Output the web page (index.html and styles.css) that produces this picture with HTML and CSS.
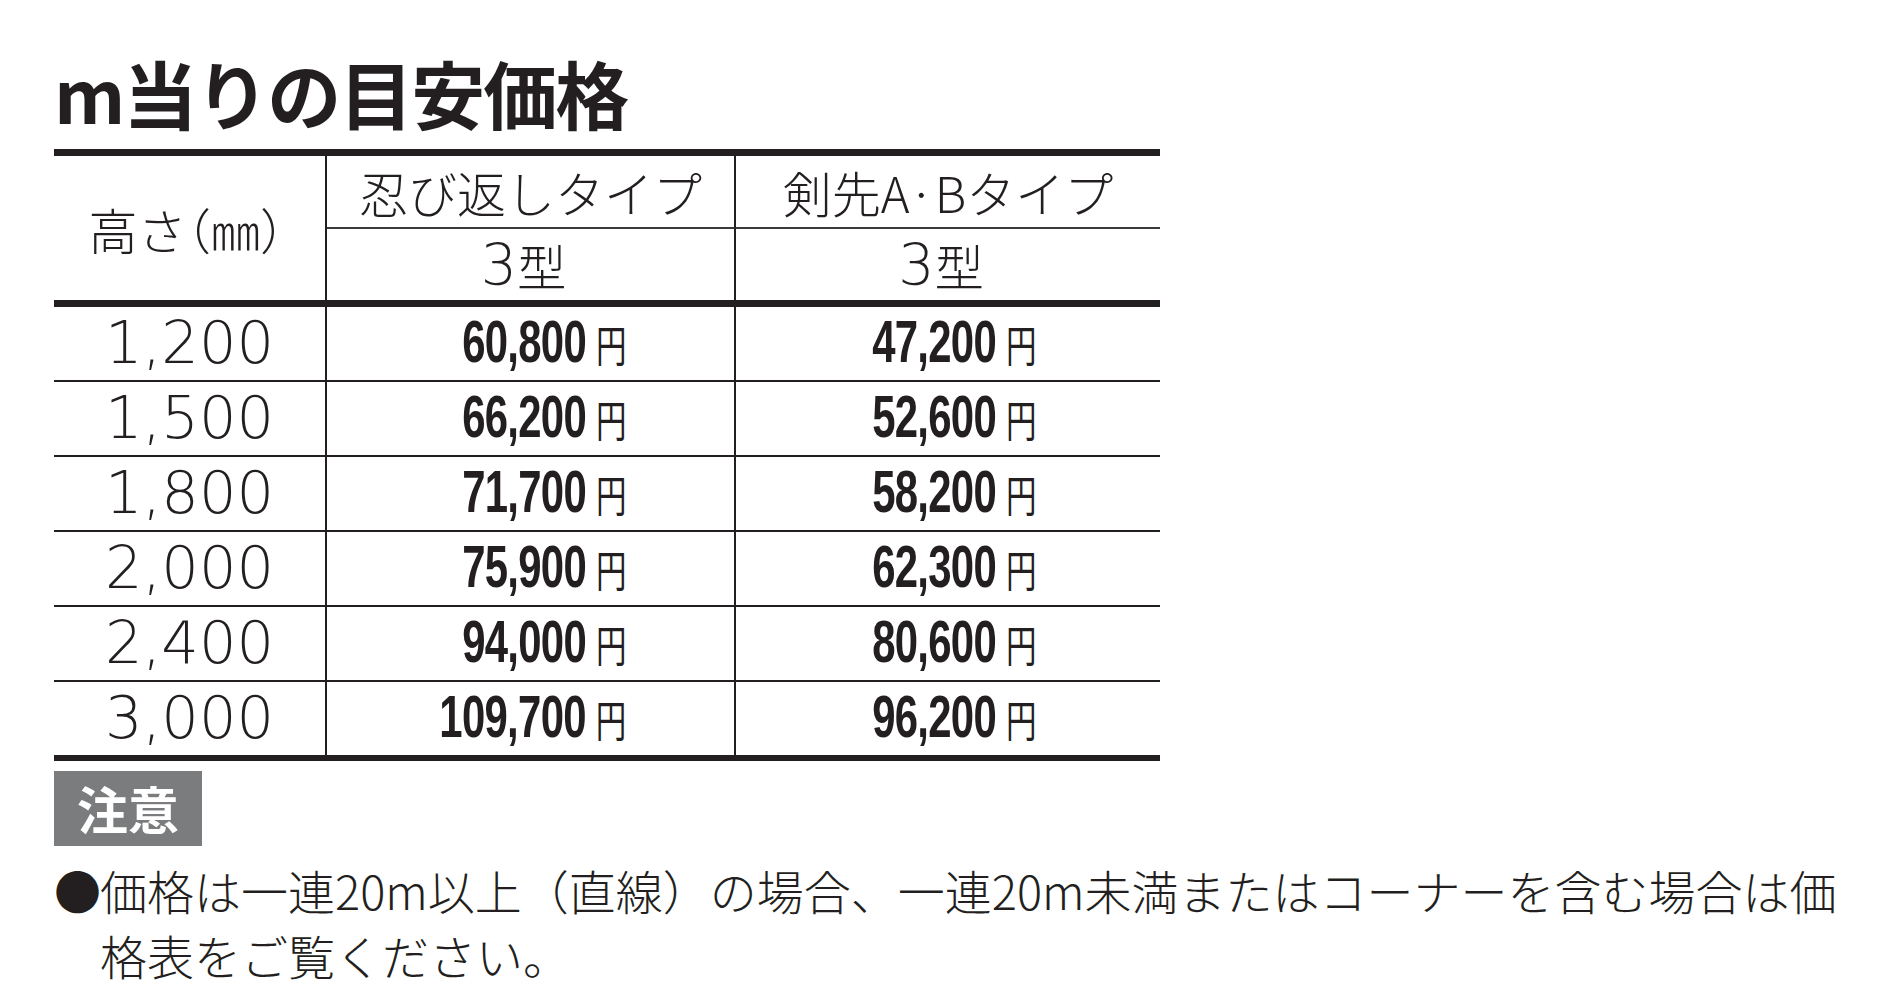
FILE: index.html
```html
<!DOCTYPE html>
<html lang="ja">
<head>
<meta charset="utf-8">
<title>m当りの目安価格</title>
<link rel="stylesheet" href="styles.css">
</head>
<body>
<main class="page">
  <h1 class="title">m当りの目安価格</h1>

  <div class="price-table">
    <div class="cell head head-height">高さ（㎜）</div>
    <div class="cell head head-type col2">忍び返しタイプ</div>
    <div class="cell head head-type col3">剣先A·Bタイプ</div>
    <div class="cell head head-model col2"><span class="num">3</span>型</div>
    <div class="cell head head-model col3"><span class="num">3</span>型</div>

    <div class="cell size">1,200</div>
    <div class="cell price col2"><span class="amount">60,800<span class="yen">円</span></span></div>
    <div class="cell price col3"><span class="amount">47,200<span class="yen">円</span></span></div>

    <div class="cell size">1,500</div>
    <div class="cell price col2"><span class="amount">66,200<span class="yen">円</span></span></div>
    <div class="cell price col3"><span class="amount">52,600<span class="yen">円</span></span></div>

    <div class="cell size">1,800</div>
    <div class="cell price col2"><span class="amount">71,700<span class="yen">円</span></span></div>
    <div class="cell price col3"><span class="amount">58,200<span class="yen">円</span></span></div>

    <div class="cell size">2,000</div>
    <div class="cell price col2"><span class="amount">75,900<span class="yen">円</span></span></div>
    <div class="cell price col3"><span class="amount">62,300<span class="yen">円</span></span></div>

    <div class="cell size">2,400</div>
    <div class="cell price col2"><span class="amount">94,000<span class="yen">円</span></span></div>
    <div class="cell price col3"><span class="amount">80,600<span class="yen">円</span></span></div>

    <div class="cell size last-row">3,000</div>
    <div class="cell price col2 last-row"><span class="amount">109,700<span class="yen">円</span></span></div>
    <div class="cell price col3 last-row"><span class="amount">96,200<span class="yen">円</span></span></div>
  </div>

  <section class="notes">
    <div class="badge">注意</div>
    <p class="note"><span class="bullet">●</span><span class="note-text">価格は一連20m以上（直線）の場合、一連20m未満またはコーナーを含む場合は価<br>格表をご覧ください。</span></p>
  </section>
</main>
</body>
</html>
```

FILE: styles.css
```css
* {
  box-sizing: border-box;
}

html, body {
  margin: 0;
  padding: 0;
  background: #ffffff;
}

body {
  color: #231f20;
  font-family: "Noto Sans CJK JP", "Noto Sans", sans-serif;
}

.page {
  padding: 55px 0 0 54px;
}

.title {
  margin: 0;
  font-size: 74px;
  line-height: 74px;
  font-weight: 700;
  letter-spacing: -2px;
}

.price-table {
  margin-top: 20px;
  width: 1106px;
  display: grid;
  grid-template-columns: 273px 409px 424px;
  border-top: 7px solid #231f20;
  border-bottom: 6px solid #231f20;
}

.cell {
  display: flex;
  align-items: center;
  justify-content: center;
  line-height: 1;
}

.col2,
.head-height,
.size {
  border-right: 2px solid #231f20;
}

.head {
  font-family: "Noto Sans CJK JP", sans-serif;
  font-weight: 300;
  font-size: 49px;
}

.head-height {
  grid-row: span 2;
  height: 151px;
  border-bottom: 7px solid #231f20;
  font-feature-settings: "halt";
  padding-right: 6px;
}

.head-type {
  height: 73px;
  border-bottom: 2px solid #3a3a3a;
}

.head-model {
  height: 78px;
  border-bottom: 7px solid #231f20;
  padding-right: 14px;
}

.num {
  font-family: "DejaVu Sans", sans-serif;
  font-weight: 200;
  font-size: 57px;
  position: relative;
  top: 1px;
}

.size,
.price {
  height: 75px;
  border-bottom: 2px solid #231f20;
}

.last-row {
  height: 73px;
  border-bottom: none;
}

.size {
  font-family: "DejaVu Sans", "Noto Sans CJK JP", sans-serif;
  font-weight: 200;
  font-size: 59px;
  padding-bottom: 2px;
}

.price {
  justify-content: flex-end;
  padding-bottom: 3px;
}

.price.col2 {
  padding-right: 108px;
}

.price.col3 {
  padding-right: 124px;
}

.amount {
  display: inline-block;
  font-family: "Liberation Sans", Arial, sans-serif;
  font-weight: 700;
  font-size: 59px;
  letter-spacing: -1px;
  transform: scaleX(0.71);
  transform-origin: right center;
  white-space: nowrap;
}

.yen {
  font-family: "Noto Sans CJK JP", sans-serif;
  font-weight: 400;
  font-size: 43px;
  letter-spacing: 0;
  margin-left: 14px;
}

.notes {
  margin-top: 10px;
}

.badge {
  width: 148px;
  height: 75px;
  background: #7b7c7e;
  color: #ffffff;
  font-weight: 700;
  font-size: 51px;
  line-height: 75px;
  text-align: center;
  letter-spacing: 0;
}

.note {
  margin: 11px 0 0 0;
  display: flex;
  font-size: 47px;
  line-height: 65px;
  font-weight: 300;
}

.bullet {
  flex: none;
  width: 46px;
  font-family: "Noto Sans CJK JP", sans-serif;
}

.note-text {
  white-space: nowrap;
}
```
